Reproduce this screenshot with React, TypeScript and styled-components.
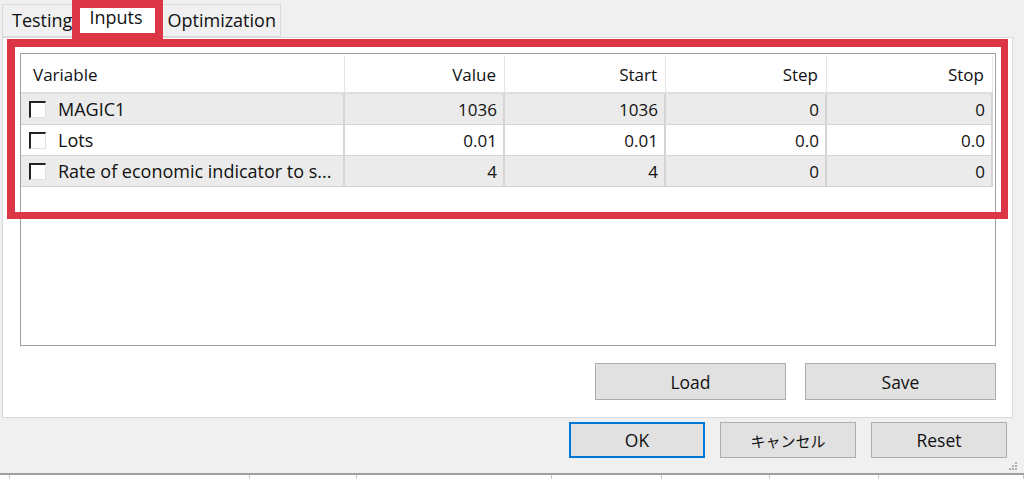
import React from 'react';
import styled, { createGlobalStyle } from 'styled-components';

interface TabProps {
  active?: boolean;
}

interface RowProps {
  shaded: boolean;
}

interface ButtonProps {
  primary?: boolean;
}

const GlobalStyle = createGlobalStyle`
  html, body {
    margin: 0;
    padding: 0;
    background: #f0f0f0;
  }
  body {
    font-family: 'Open Sans', 'Noto Sans', 'Noto Sans CJK JP', sans-serif;
    color: #111;
    overflow: hidden;
  }
`;

const Window = styled.div`
  position: relative;
  display: flex;
  flex-direction: column;
  width: 1024px;
  height: 479px;
  background: #f0f0f0;
  overflow: hidden;
`;

const TabStrip = styled.div`
  display: flex;
  align-items: flex-end;
  height: 37px;
  padding-left: 2px;
`;

const Tab = styled.div`
  position: relative;
  display: flex;
  align-items: center;
  box-sizing: border-box;
  height: ${(props: TabProps) => (props.active ? '38px' : '33px')};
  margin-bottom: ${(props: TabProps) => (props.active ? '-1px' : '0')};
  margin-left: ${(props: TabProps) => (props.active ? '-2px' : '0')};
  margin-right: ${(props: TabProps) => (props.active ? '-2px' : '0')};
  padding: ${(props: TabProps) => (props.active ? '0 16px 5px 13px' : '0 4px 1px 9px')};
  z-index: ${(props: TabProps) => (props.active ? 1 : 0)};
  background: ${(props: TabProps) => (props.active ? '#fff' : '#f0f0f0')};
  border: 1px solid #d9d9d9;
  border-bottom: ${(props: TabProps) => (props.active ? 'none' : '1px solid #d9d9d9')};
  font-size: 18px;
  white-space: nowrap;
`;

const TabPage = styled.div`
  display: flex;
  flex-direction: column;
  box-sizing: border-box;
  width: 1011px;
  height: 381px;
  margin-left: 2px;
  padding: 15px 16px 0 17px;
  background: #fff;
  border: 1px solid #d9d9d9;
`;

const Grid = styled.div`
  box-sizing: border-box;
  height: 293px;
  border: 1px solid #a0a0a0;
  background: #fff;
`;

const GridRow = styled.div`
  display: grid;
  grid-template-columns: 324px 160px 161px 161px 166px;
  width: 972px;
  height: 31px;
  background: ${(props: RowProps) => (props.shaded ? '#ebebeb' : '#fff')};
  border-bottom: 1px solid #d4d4d4;
  box-sizing: border-box;
`;

const HeaderRow = styled(GridRow)`
  height: 40px;
  padding-top: 2px;
  border-bottom: 2px solid #dedede;
`;

const Cell = styled.div`
  display: flex;
  align-items: center;
  justify-content: flex-end;
  padding: 0 6px 0 8px;
  font-size: 17px;
  white-space: nowrap;
  overflow: hidden;
  border-right: 2px solid #d4d4d4;
`;

const HeadCell = styled(Cell)`
  padding: 0 8px 0 12px;
  border-right: 1px solid #e5e5e5;
`;

const VariableHead = styled(HeadCell)`
  justify-content: flex-start;
`;

const NameCell = styled(Cell)`
  justify-content: flex-start;
  gap: 12px;
  font-size: 18px;
`;

const Check = styled.span`
  box-sizing: border-box;
  width: 17px;
  height: 17px;
  flex: none;
  background: #fff;
  border-top: 2px solid #222;
  border-left: 2px solid #222;
  border-right: 1px solid #e0e0e0;
  border-bottom: 1px solid #e0e0e0;
`;

const ButtonRow = styled.div`
  display: flex;
  justify-content: flex-end;
  gap: 19px;
  margin-top: 17px;
`;

const Button = styled.div`
  display: flex;
  align-items: center;
  justify-content: center;
  box-sizing: border-box;
  width: 191px;
  height: 37px;
  background: #e1e1e1;
  border: 1px solid #adadad;
  font-size: 17.5px;
`;

const DialogButtons = styled.div`
  display: flex;
  justify-content: flex-end;
  gap: 15px;
  margin-top: 4px;
  padding-right: 17px;
`;

const DialogButton = styled(Button)`
  width: 136px;
  height: 36px;
  border: ${(props: ButtonProps) => (props.primary ? '2px solid #0078d7' : '1px solid #adadad')};
`;

const Jp = styled.span`
  font-size: 15px;
`;

const Grip = styled.svg`
  position: absolute;
  right: 6px;
  bottom: 8px;
`;

const LowerTable = styled.div`
  display: grid;
  grid-template-columns: 10px 240px 107px 195px 110px 108px 109px 1fr;
  margin-top: auto;
  height: 4px;
  background: #fff;
  border-top: 2px solid #a0a0a0;
`;

const LowerCell = styled.div`
  border-right: 1px solid #c8c8c8;
`;

const Highlight = styled.div`
  position: absolute;
  z-index: 5;
  box-sizing: border-box;
  border: 8px solid #dc3545;
  pointer-events: none;
`;

const TabHighlight = styled(Highlight)`
  left: 72px;
  top: 0;
  width: 91px;
  height: 41px;
`;

const GridHighlight = styled(Highlight)`
  left: 7px;
  top: 39px;
  width: 1001px;
  height: 180px;
  border-width: 8px 7px 7px 8px;
`;

const rows = [
  { name: 'MAGIC1', value: '1036', start: '1036', step: '0', stop: '0' },
  { name: 'Lots', value: '0.01', start: '0.01', step: '0.0', stop: '0.0' },
  { name: 'Rate of economic indicator to s...', value: '4', start: '4', step: '0', stop: '0' },
];

const App = () => {
  return (
    <Window>
      <GlobalStyle />
      <TabStrip>
        <Tab>Testing</Tab>
        <Tab active>Inputs</Tab>
        <Tab>Optimization</Tab>
      </TabStrip>
      <TabPage>
        <Grid>
          <HeaderRow shaded={false}>
            <VariableHead>Variable</VariableHead>
            <HeadCell>Value</HeadCell>
            <HeadCell>Start</HeadCell>
            <HeadCell>Step</HeadCell>
            <HeadCell>Stop</HeadCell>
          </HeaderRow>
          {rows.map((r, i) => (
            <GridRow key={r.name} shaded={i % 2 === 0}>
              <NameCell>
                <Check />
                {r.name}
              </NameCell>
              <Cell>{r.value}</Cell>
              <Cell>{r.start}</Cell>
              <Cell>{r.step}</Cell>
              <Cell>{r.stop}</Cell>
            </GridRow>
          ))}
        </Grid>
        <ButtonRow>
          <Button>Load</Button>
          <Button>Save</Button>
        </ButtonRow>
      </TabPage>
      <DialogButtons>
        <DialogButton primary>OK</DialogButton>
        <DialogButton>
          <Jp>キャンセル</Jp>
        </DialogButton>
        <DialogButton>Reset</DialogButton>
      </DialogButtons>
      <Grip width="10" height="10" viewBox="0 0 10 10">
        <rect x="7" y="1" width="2" height="2" fill="#b0b0b0" />
        <rect x="4" y="4" width="2" height="2" fill="#b0b0b0" />
        <rect x="7" y="4" width="2" height="2" fill="#b0b0b0" />
        <rect x="1" y="7" width="2" height="2" fill="#b0b0b0" />
        <rect x="4" y="7" width="2" height="2" fill="#b0b0b0" />
        <rect x="7" y="7" width="2" height="2" fill="#b0b0b0" />
      </Grip>
      <LowerTable>
        {Array.from({ length: 8 }).map((_, i) => (
          <LowerCell key={i} />
        ))}
      </LowerTable>
      <TabHighlight />
      <GridHighlight />
    </Window>
  );
};

export default App;
